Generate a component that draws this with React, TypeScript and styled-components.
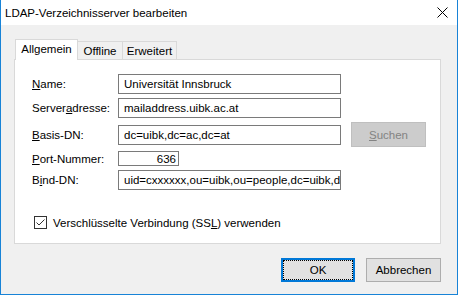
import React from 'react';
import styled, { createGlobalStyle } from 'styled-components';

const font = `"Liberation Sans", Arial, sans-serif`;

const GlobalStyle = createGlobalStyle`
  html, body {
    margin: 0;
    padding: 0;
    background: #ffffff;
  }
  body {
    font-family: ${font};
    font-size: 11.5px;
    color: #000;
  }
  * { box-sizing: border-box; }
`;

const Window = styled.div`
  width: 458px;
  height: 295px;
  display: flex;
  flex-direction: column;
  background: #f0f0f0;
  border: 1px solid #1883d7;
  border-top: none;
`;

const TitleBar = styled.div`
  height: 25px;
  flex: none;
  background: #ffffff;
  display: flex;
  align-items: center;
  justify-content: space-between;
  padding-left: 4px;
  padding-right: 9px;
`;

const Title = styled.span`
  font-size: 11.5px;
  padding-top: 1px;
`;

const CloseIcon = styled.svg`
  width: 11px;
  height: 11px;
  display: block;
`;

const Body = styled.div`
  flex: 1;
  display: flex;
  flex-direction: column;
  padding: 14px 16px 0 13px;
`;

const TabStrip = styled.div`
  height: 20px;
  display: flex;
  align-items: flex-end;
  padding-left: 1px;
  position: relative;
  z-index: 1;
`;

const Tab = styled.div<{ $active?: boolean; $w: number }>`
  width: ${p => p.$w}px;
  height: ${p => (p.$active ? 21 : 18)}px;
  margin-bottom: ${p => (p.$active ? -1 : 0)}px;
  margin-left: -1px;
  &:first-child { margin-left: 0; }
  border: 1px solid #d9d9d9;
  border-bottom: none;
  background: ${p => (p.$active ? '#ffffff' : '#f0f0f0')};
  position: relative;
  z-index: ${p => (p.$active ? 2 : 1)};
  display: flex;
  align-items: center;
  justify-content: center;
  padding-bottom: ${p => (p.$active ? 2 : 0)}px;
`;

const Panel = styled.div`
  width: 427px;
  height: 185px;
  background: #ffffff;
  border: 1px solid #d9d9d9;
  padding: 14px 0 0 17px;
  display: flex;
  flex-direction: column;
`;

const Form = styled.div`
  display: flex;
  flex-direction: column;
  gap: 4px;
`;

const Row = styled.div`
  display: flex;
  align-items: center;
`;

const Label = styled.span`
  width: 86px;
  flex: none;
`;

const Key = styled.span`
  text-decoration: underline;
  text-underline-offset: 1px;
`;

const Field = styled.input<{ $w?: number; $h?: number; $right?: boolean }>`
  width: ${p => p.$w ?? 223}px;
  height: ${p => p.$h ?? 20}px;
  border: 1px solid #7a7a7a;
  background: #ffffff;
  padding: 0 ${p => (p.$right ? 2 : 0)}px 0 5px;
  margin: 0;
  font-family: ${font};
  font-size: 11.5px;
  color: #000;
  text-align: ${p => (p.$right ? 'right' : 'left')};
  outline: none;
`;

const Button = styled.button<{ $w: number; $h: number; $default?: boolean }>`
  width: ${p => p.$w}px;
  height: ${p => p.$h}px;
  margin: 0;
  padding: 0;
  font-family: ${font};
  font-size: 11.5px;
  color: #000;
  background: #e1e1e1;
  border: ${p => (p.$default ? '2px solid #0078d7' : '1px solid #adadad')};
  outline: ${p => (p.$default ? '1px dotted #000' : 'none')};
  outline-offset: -3px;

  &:disabled {
    background: #cccccc;
    border-color: #bfbfbf;
    color: #838383;
  }
`;

const SearchButton = styled(Button)`
  margin-left: 10px;
`;

const CheckRow = styled.label`
  display: flex;
  align-items: center;
  gap: 6px;
  margin: 26px 0 0 2px;
`;

const CheckBox = styled.span`
  width: 13px;
  height: 13px;
  flex: none;
  border: 1px solid #333333;
  background: #ffffff;
  display: flex;
  align-items: center;
  justify-content: center;
`;

const Footer = styled.div`
  display: flex;
  justify-content: flex-end;
  gap: 11px;
  margin-top: 14px;
  width: 427px;
`;

export default function App() {
  return (
    <>
      <GlobalStyle />
      <Window>
        <TitleBar>
          <Title>LDAP-Verzeichnisserver bearbeiten</Title>
          <CloseIcon viewBox="0 0 11 11">
            <path d="M0.5 0.5 L10.5 10.5 M10.5 0.5 L0.5 10.5" stroke="#000" strokeWidth="1" fill="none" />
          </CloseIcon>
        </TitleBar>
        <Body>
          <TabStrip>
            <Tab $active $w={63}>Allgemein</Tab>
            <Tab $w={46}>Offline</Tab>
            <Tab $w={55}>Erweitert</Tab>
          </TabStrip>
          <Panel>
            <Form>
              <Row>
                <Label><Key>N</Key>ame:</Label>
                <Field readOnly defaultValue="Universität Innsbruck" />
              </Row>
              <Row>
                <Label>Server<Key>a</Key>dresse:</Label>
                <Field readOnly defaultValue="mailaddress.uibk.ac.at" />
              </Row>
              <Row>
                <Label><Key>B</Key>asis-DN:</Label>
                <Field readOnly defaultValue="dc=uibk,dc=ac,dc=at" />
                <SearchButton disabled $w={75} $h={25}><Key>S</Key>uchen</SearchButton>
              </Row>
              <Row>
                <Label><Key>P</Key>ort-Nummer:</Label>
                <Field readOnly $w={61} $h={15} $right defaultValue="636" />
              </Row>
              <Row>
                <Label>B<Key>i</Key>nd-DN:</Label>
                <Field readOnly defaultValue="uid=cxxxxxx,ou=uibk,ou=people,dc=uibk,dc=ac,dc=at" />
              </Row>
            </Form>
            <CheckRow>
              <CheckBox>
                <svg width="11" height="11" viewBox="0 0 11 11">
                  <polyline points="1.5,5.5 4,8 9.5,2.5" stroke="#333" strokeWidth="1" fill="none" />
                </svg>
              </CheckBox>
              <span>Verschlüsselte Verbindung (SS<Key>L</Key>) verwenden</span>
            </CheckRow>
          </Panel>
          <Footer>
            <Button $default $w={74} $h={24}>OK</Button>
            <Button $w={75} $h={24}>Abbrechen</Button>
          </Footer>
        </Body>
      </Window>
    </>
  );
}
